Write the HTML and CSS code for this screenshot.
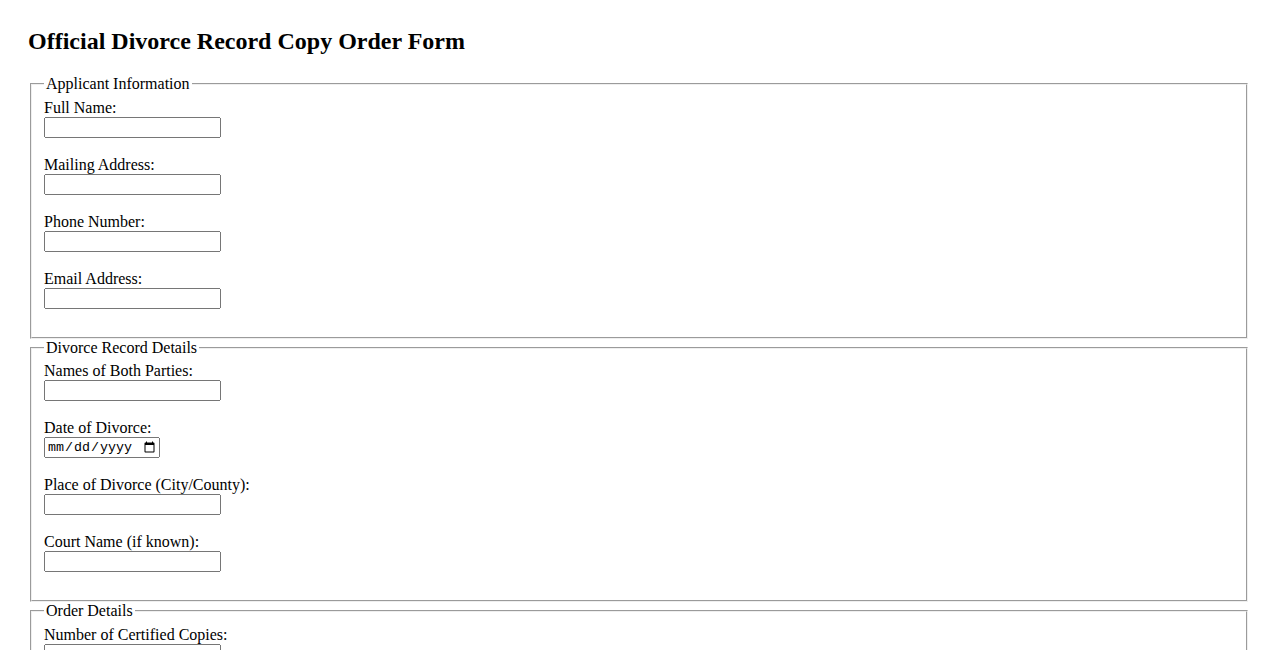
FILE: index.html
```html
<!DOCTYPE html>
<html lang="en">
  <head>
    <meta charset="UTF-8" />
    <meta name="viewport" content="width=device-width, initial-scale=1.0" />
    <title>Official Divorce Record Copy Order Form</title>
    <link rel="stylesheet" href="styles.css">
  </head>
  <body>
    <h2 class="form-title">Official Divorce Record Copy Order Form</h2>

    <form class="order-form">
      <fieldset>
        <legend>Applicant Information</legend>
        <label for="full-name">Full Name:</label><br>
        <input type="text" id="full-name" name="full-name"><br><br>

        <label for="address">Mailing Address:</label><br>
        <input type="text" id="address" name="address"><br><br>

        <label for="phone">Phone Number:</label><br>
        <input type="tel" id="phone" name="phone"><br><br>

        <label for="email">Email Address:</label><br>
        <input type="email" id="email" name="email"><br><br>
      </fieldset>

      <fieldset>
        <legend>Divorce Record Details</legend>
        <label for="parties">Names of Both Parties:</label><br>
        <input type="text" id="parties" name="parties"><br><br>

        <label for="divorce-date">Date of Divorce:</label><br>
        <input type="date" id="divorce-date" name="divorce-date"><br><br>

        <label for="place">Place of Divorce (City/County):</label><br>
        <input type="text" id="place" name="place"><br><br>

        <label for="court">Court Name (if known):</label><br>
        <input type="text" id="court" name="court"><br><br>
      </fieldset>

      <fieldset>
        <legend>Order Details</legend>
        <label for="copies">Number of Certified Copies:</label><br>
        <input type="number" id="copies" name="copies" min="1"><br><br>

        <label for="purpose">Purpose of Request:</label><br>
        <input type="text" id="purpose" name="purpose"><br><br>
      </fieldset>
    </form>
  </body>
</html>
```

FILE: styles.css
```css
body {
  font-family: 'Liberation Serif', 'Times New Roman', serif;
  font-size: 16px;
  color: #000;
  background-color: #fff;
  margin: 8px;
  padding: 20px;
}

.form-title {
  font-size: 24px;
  margin: 0 0 20px;
}

.order-form input {
  font-family: 'Liberation Sans', Arial, sans-serif;
  font-size: 13.333px;
  box-sizing: border-box;
  width: 177px;
  height: 21px;
}

.order-form input[type="date"] {
  font-family: 'Liberation Mono', 'Courier New', monospace;
  width: 116px;
}
```
